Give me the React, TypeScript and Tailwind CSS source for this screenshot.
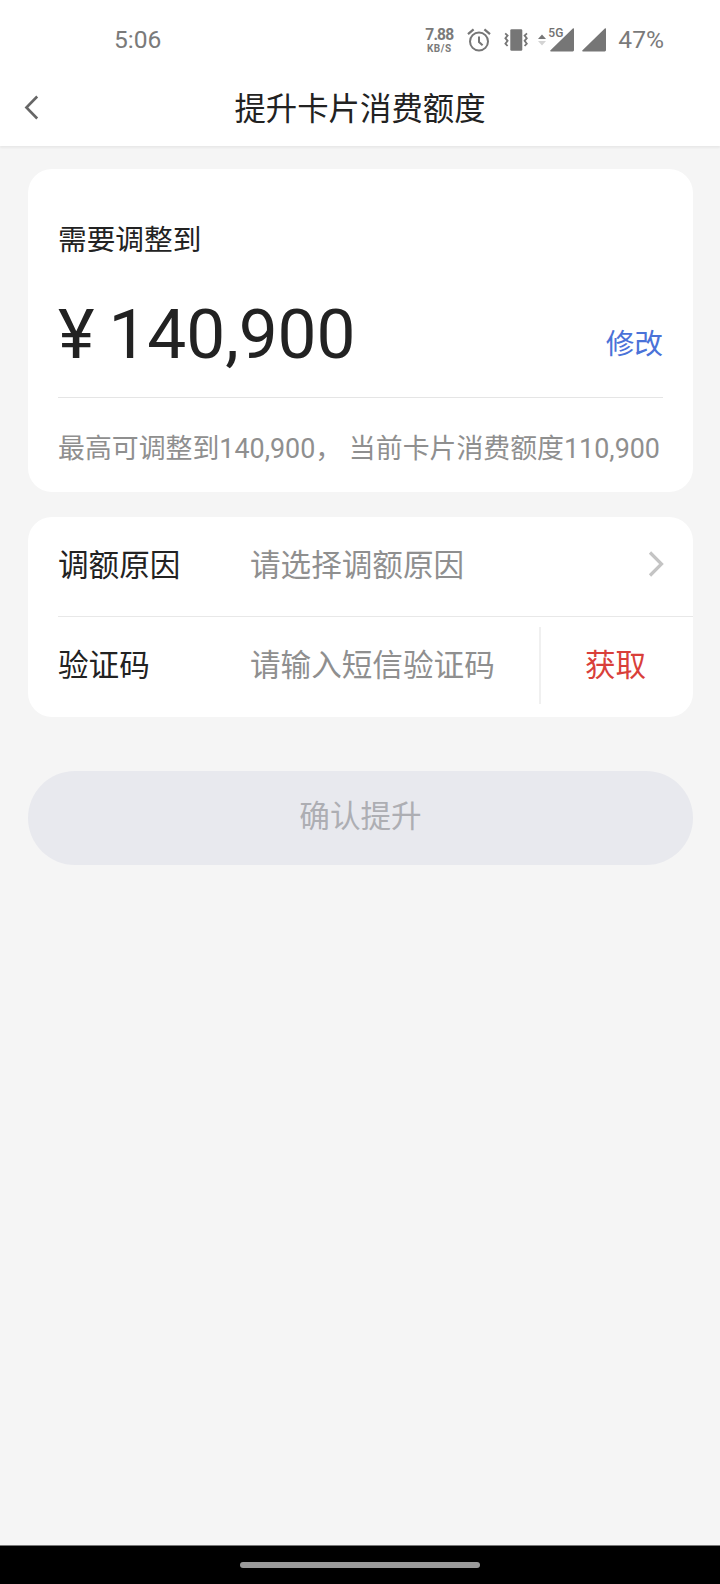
import type { ReactNode } from 'react';

function AlarmIcon() {
  return (
    <svg width="26" height="24" viewBox="0 0 26 24" fill="none" stroke="#767676" strokeWidth="2">
      <circle cx="13" cy="13.5" r="9" />
      <path d="M13 8.5v5.5l3.6 3.2" />
      <path d="M2 6.2l5.6-4.8M24 6.2l-5.6-4.8" strokeWidth="2.2" />
    </svg>
  );
}

function VibrateIcon() {
  return (
    <svg width="24" height="22" viewBox="0 0 24 22" fill="none" stroke="#767676" strokeWidth="1.8">
      <rect x="6.3" y="0.3" width="12" height="21.4" rx="1.2" fill="#767676" stroke="none" />
      <path d="M1.2 4.4l2.4 2.2-2.2 2.6 2.2 2.6-2.2 2.8 2.2 2.4" />
      <path d="M23 4.4l-2.4 2.2 2.2 2.6-2.2 2.6 2.2 2.8-2.2 2.4" />
    </svg>
  );
}

function SignalIcon() {
  return (
    <svg width="24" height="24" viewBox="0 0 24 24" fill="#767676">
      <path d="M22.8.6c.6-.6 1.2-.4 1.2.5v21c0 .8-.5 1.3-1.3 1.3H1c-.9 0-1.1-.6-.5-1.2z" />
    </svg>
  );
}

/** Mobile data: traffic arrows, a network label laid over the signal wedge. */
function DataSignal() {
  return (
    <div className="relative ml-[9px] flex h-6 w-[37px] justify-end">
      <svg className="absolute left-[1px] top-[6px]" width="8" height="12" viewBox="0 0 8 12">
        <path d="M0 5l4-4.4L8 5z" fill="#767676" />
        <path d="M0 7l4 4.4L8 7z" fill="#d4d4d4" />
      </svg>
      <SignalIcon />
      <span className="absolute left-[11px] top-[-1px] text-[12px] font-medium leading-[12px] text-[#707070] [-webkit-text-stroke:2px_white] [paint-order:stroke_fill]">
        5G
      </span>
    </div>
  );
}

function StatusBar() {
  return (
    <div className="flex h-20 items-center pl-[114px] pr-[56px] text-[24.6px] text-[#7a7a7a]">
      <span className="pt-px">5:06</span>
      <div className="ml-auto flex items-center">
        <div className="flex w-[28px] flex-col items-center pt-[3px] font-bold">
          <span className="text-[15.6px] leading-[15px] tracking-[-0.8px]">7.88</span>
          <span className="text-[10px] leading-[11px] tracking-[0.5px]">KB/S</span>
        </div>
        <div className="ml-[13px]"><AlarmIcon /></div>
        <div className="ml-3"><VibrateIcon /></div>
        <DataSignal />
        <div className="ml-2"><SignalIcon /></div>
        <span className="ml-3 pt-px">47%</span>
      </div>
    </div>
  );
}

function NavBar() {
  return (
    <div className="relative flex h-[66px] items-center justify-center pb-[7px]">
      <svg className="absolute left-6 top-[15px]" width="15" height="25" viewBox="0 0 15 25" fill="none">
        <path d="M13.2 1.5L2.4 12.5l10.8 11" stroke="#666" strokeWidth="2.6" />
      </svg>
      <h1 className="text-[31.4px] leading-[46px] text-[#222]">提升卡片消费额度</h1>
    </div>
  );
}

function FormRow({ label, placeholder, children }: { label: string; placeholder: string; children: ReactNode }) {
  return (
    <div className="flex h-[99px] items-center text-[30.6px]">
      <span className="w-[192px] pb-[2px] text-[#222]">{label}</span>
      <span className="pb-[2px] text-[#8f8f8f]">{placeholder}</span>
      {children}
    </div>
  );
}

export default function App() {
  return (
    <div className="flex h-[1584px] w-[720px] flex-col bg-[#f5f5f5] font-[Roboto,'Noto_Sans_CJK_SC',sans-serif]">
      <header className="bg-white shadow-[0_2px_2px_rgba(0,0,0,0.05)]">
        <StatusBar />
        <NavBar />
      </header>

      <main className="flex flex-1 flex-col pl-7 pr-[27px] pt-[23px]">
        <section className="h-[323px] rounded-[24px] bg-white px-[30px] pt-[49px]">
          <p className="text-[28.7px] leading-[44px] text-[#222]">需要调整到</p>
          <div className="flex h-[136px] items-end justify-between border-b border-[#e5e5e5] pb-[21px]">
            <span className="text-[69.4px] leading-[82px] tracking-[-0.1px] text-[#222]">
              <span className="mr-[-3px]">¥</span> 140,900
            </span>
            <span className="pb-[10px] text-[28.7px] leading-[44px] text-[#4a72d8]">修改</span>
          </div>
          <p className="mt-[29px] whitespace-nowrap text-[26.9px] leading-[44px] text-[#8f8f8f]">
            最高可调整到140,900， 当前卡片消费额度110,900
          </p>
        </section>

        <section className="mt-[25px] h-[200px] rounded-[24px] bg-white pl-[30px]">
          <div className="border-b border-[#e8e8e8]">
            <FormRow label="调额原因" placeholder="请选择调额原因">
              <svg className="ml-auto mr-[29px] mt-[-5px]" width="16" height="26" viewBox="0 0 16 26" fill="none">
                <path d="M2 1.5L13.5 13 2 24.5" stroke="#c4c4c4" strokeWidth="3.2" />
              </svg>
            </FormRow>
          </div>
          <FormRow label="验证码" placeholder="请输入短信验证码">
            <div className="mb-[2px] ml-auto flex h-[77px] w-[154px] items-center justify-center border-l-2 border-[#f0f0f0] pr-[3px]">
              <span className="text-[#d93f3a]">获取</span>
            </div>
          </FormRow>
        </section>

        <button className="mt-[54px] h-[94px] rounded-full bg-[#e8e9ee] pb-[2px] text-[30.6px] text-[#adaeb3]">
          确认提升
        </button>
      </main>

      <footer className="flex h-[39px] justify-center border-t border-[#777] bg-black pt-4">
        <div className="h-[6px] w-60 rounded-full bg-[#999]" />
      </footer>
    </div>
  );
}
